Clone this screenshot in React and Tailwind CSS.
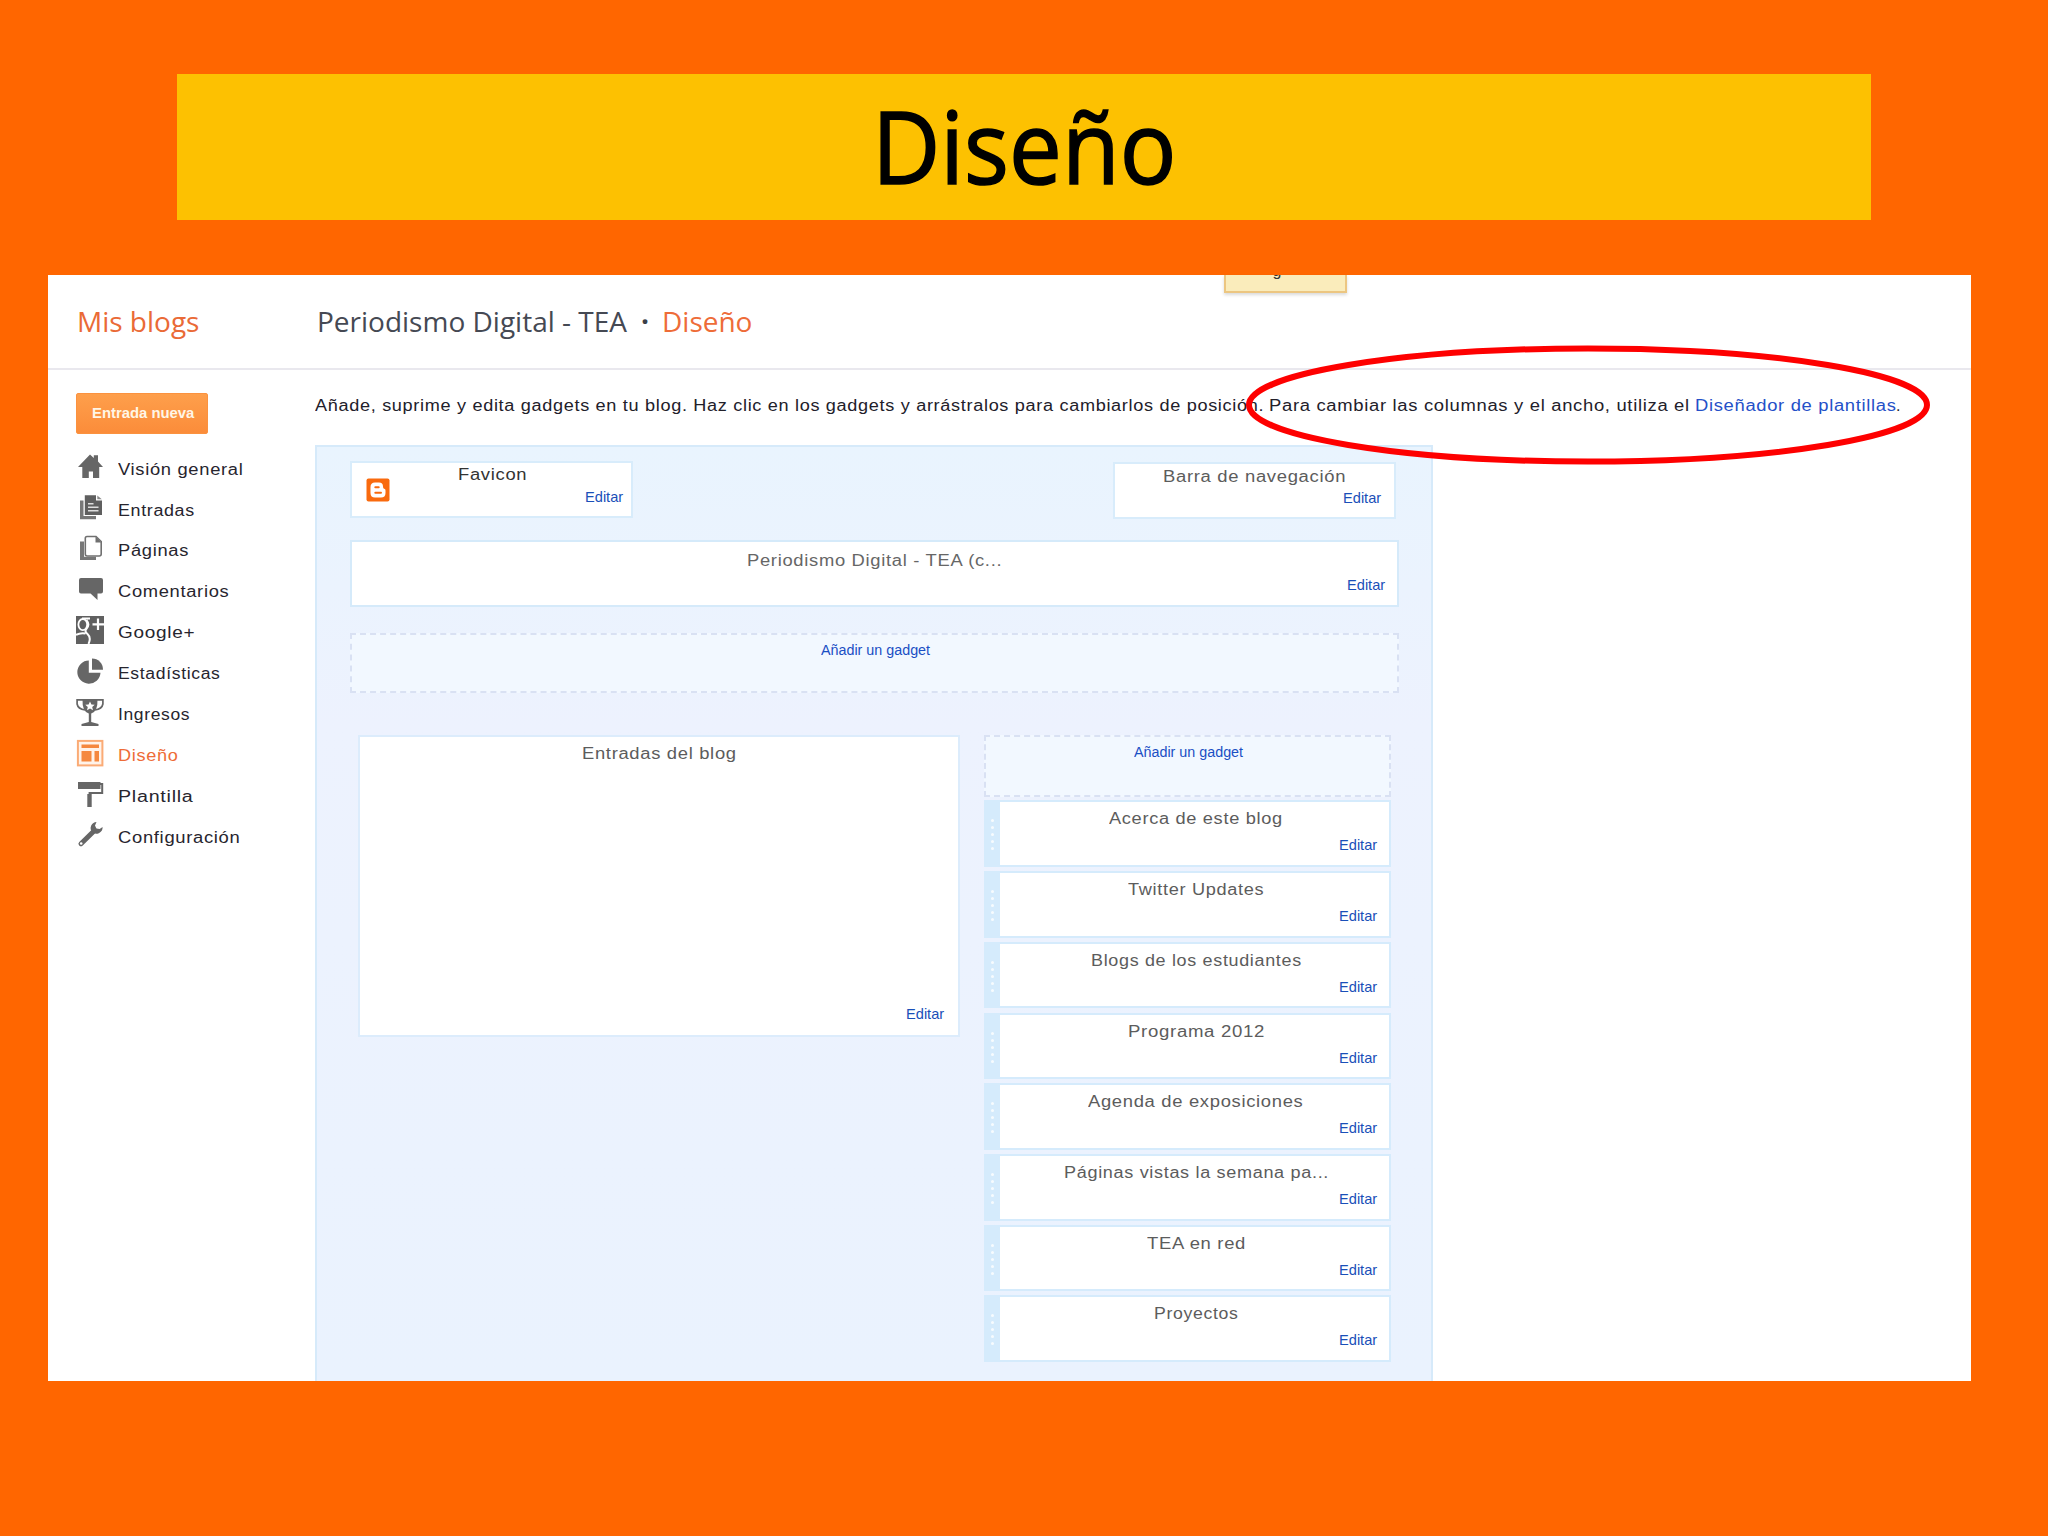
import React, { useLayoutEffect, useRef, useState } from "react";

/* Single-line text stretched horizontally to an exact width. */
function Fit({ w, className = "", children }) {
  const ref = useRef(null);
  const [scale, setScale] = useState(1);
  useLayoutEffect(() => {
    const natural = ref.current.offsetWidth;
    if (natural) setScale(w / natural);
  }, [w]);
  return (
    <span className={`block shrink-0 ${className}`} style={{ width: w }}>
      <span
        ref={ref}
        className="inline-block origin-left whitespace-nowrap align-top"
        style={{ transform: `scaleX(${scale})` }}
      >
        {children}
      </span>
    </span>
  );
}

const G = "#666666";

const icons = {
  home: (
    <g fill={G}>
      <path d="M14 2.5 L17.8 6 V3.2 H22 V9.6 L27 15 H23.2 V26 H17 V19.5 H12.8 V26 H6.3 V15 H2 Z" />
    </g>
  ),
  posts: (
    <g>
      <path d="M4 7.5 H7.5 V23 H20 V26.3 H4 Z" fill="#777" />
      <path d="M8.8 2.2 H20 V7.5 H26 V22 H8.8 Z" fill="#5f5f5f" />
      <path d="M21.3 2.4 L25.8 6.2 H21.3 Z" fill="#8a8a8a" />
      <path d="M12 10.7 H17.5 M12 14.2 H22.5 M12 17.7 H22.5" stroke="#ddd" strokeWidth="1.4" />
    </g>
  ),
  pages: (
    <g>
      <path d="M4 7.5 H8 V22.8 H20 V26 H4 Z" fill="#777" />
      <path d="M11 2.5 H20 L25.2 7.5 V20 Q25.2 22 23.2 22 H11.3 Q9.3 22 9.3 20 V4.2 Q9.3 2.5 11 2.5 Z" fill="#fff" stroke="#707070" strokeWidth="1.6" />
      <path d="M19.5 2.5 L25.5 8.5 H19.5 Z" fill="#707070" />
    </g>
  ),
  comments: (
    <path d="M5 3 H25 Q27 3 27 5 V16.5 Q27 18.5 25 18.5 H21.5 V25 L14.5 18.5 H5 Q3 18.5 3 16.5 V5 Q3 3 5 3 Z" fill={G} />
  ),
  gplus: (
    <g>
      <rect width="28" height="28" fill="#606060" />
      <ellipse cx="6.8" cy="8.6" rx="4.4" ry="5.6" fill="none" stroke="#fff" strokeWidth="1.8" />
      <path d="M6 2.4 H14 M10.5 4 Q14.5 9 10 13.5 Q8.5 15.5 11.5 18 Q15.5 21.5 12.5 28 M0 19 Q4 16.5 9.5 17.5" fill="none" stroke="#fff" strokeWidth="2" />
      <path d="M22 2.5 V14 M16.5 8.4 H28" stroke="#fff" strokeWidth="2.2" />
    </g>
  ),
  stats: (
    <g fill={G}>
      <path d="M12.8 3.5 V15.8 H24.5 A11.6 11.6 0 1 1 12.8 3.5 Z" />
      <path d="M16 1.5 A11 11 0 0 1 27 12.8 H16 Z" />
    </g>
  ),
  trophy: (
    <g>
      <path d="M6.5 1 H21.5 Q22 13.5 15.2 15.5 V24 L22.5 26 V28 H5.5 V26 L12.8 24 V15.5 Q6 13.5 6.5 1 Z" fill={G} />
      <path d="M7 1.8 H1.1 V6 Q2 11 9 12 M21 1.8 H26.9 V6 Q26 11 19 12" fill="none" stroke={G} strokeWidth="1.7" />
      <path d="M14 3.4 L15.4 6.5 L18.7 6.8 L16.2 9 L17 12.3 L14 10.6 L11 12.3 L11.8 9 L9.3 6.8 L12.6 6.5 Z" fill="#fff" />
    </g>
  ),
  layout: (
    <g>
      <rect x="1.9" y="1.9" width="24.5" height="24.5" fill="#fff3ea" stroke="#fbab75" strokeWidth="2" />
      <path d="M5.5 5.5 H23 V9 H5.5 Z M5.5 12 H15.5 V22.5 H5.5 Z M18.5 12 H23 V22.5 H18.5 Z" fill="#f5883f" />
    </g>
  ),
  template: (
    <g>
      <path d="M2 2 H24.5 V9 H2 Z" fill={G} />
      <path d="M24 4 H26.2 V13 H13.6 V18" fill="none" stroke={G} strokeWidth="2" />
      <path d="M11.3 14 H15.7 V27 H11.3 Z" fill={G} />
    </g>
  ),
  settings: (
    <g>
      <path d="M5 23.7 L18.5 10.5" stroke={G} strokeWidth="5" strokeLinecap="round" />
      <path d="M20.5 2 L19 5.4 L20.4 8.6 L23.6 9 L26.6 7 Q26.8 11.3 22.8 13.2 Q19 14.8 16.2 12 Q13.6 9.3 15.2 5.6 Q17 2 20.5 2 Z" fill={G} />
      <circle cx="5.2" cy="23.5" r="1.3" fill="#fff" />
    </g>
  ),
};

const menu = [
  ["home", "Visión general", 126],
  ["posts", "Entradas", 77],
  ["pages", "Páginas", 71],
  ["comments", "Comentarios", 111],
  ["gplus", "Google+", 77],
  ["stats", "Estadísticas", 102],
  ["trophy", "Ingresos", 72],
  ["layout", "Diseño", 60],
  ["template", "Plantilla", 75],
  ["settings", "Configuración", 123],
];

const gadgets = [
  ["Acerca de este blog", 174],
  ["Twitter Updates", 136],
  ["Blogs de los estudiantes", 211],
  ["Programa 2012", 137],
  ["Agenda de exposiciones", 216],
  ["Páginas vistas la semana pa...", 265],
  ["TEA en red", 99],
  ["Proyectos", 85],
];

function Edit({ className = "" }) {
  return (
    <Fit w={38} className={`self-end text-[15px] leading-5 text-[#1a4fb8] ${className}`}>
      Editar
    </Fit>
  );
}

function AddGadget({ className = "" }) {
  return (
    <div className={`flex justify-center border-2 border-dashed border-[#d9e1f3] bg-[#f2f8ff] pl-px ${className}`}>
      <Fit w={109} className="text-[15.5px] leading-5 text-[#1a4fc4]">
        Añadir un gadget
      </Fit>
    </div>
  );
}

function Gadget({ title, w }) {
  return (
    <div className="flex h-[66.6px] w-[407px] border-2 border-[#d5ebfc] bg-[#d5ebfc]">
      <div className="flex w-[14px] flex-col items-center gap-1 pt-[17px] pr-[2px]">
        {[0, 1, 2, 3, 4].map((d) => (
          <span key={d} className="size-[3px] rounded-full bg-white/80" />
        ))}
      </div>
      <div className="flex grow flex-col items-center bg-white pt-[7px] pr-[12px]">
        <Fit w={w} className="ml-[15px] text-base leading-5 tracking-[0.6px] text-[#5c5c5c]">
          {title}
        </Fit>
        <Edit className="mt-[6px]" />
      </div>
    </div>
  );
}

export default function App() {
  return (
    <div className="h-[1536px] w-[2048px] overflow-hidden bg-[#ff6600] pt-[74px] font-['Liberation_Sans',sans-serif]">
      <h1 className="ml-[177px] flex h-[146px] w-[1694px] justify-center bg-[#fdc101] font-['Open_Sans',sans-serif] text-[101px] leading-[143px] text-black [-webkit-text-stroke:1.6px_black]">
        <Fit w={304}>Diseño</Fit>
      </h1>

      <div className="relative mt-[55px] ml-[48px] h-[1106px] w-[1923px] bg-white">
        <header className="flex h-[95px] border-b-2 border-[#e9e8ee] pt-[26px] font-['Open_Sans',sans-serif] text-[28px] leading-[40px]">
          <Fit w={122} className="ml-[29px] text-[#ea6a36]">Mis blogs</Fit>
          <Fit w={310} className="ml-[118px] text-[#454953]">Periodismo Digital - TEA</Fit>
          <span className="ml-[14px] w-[8px] text-center font-bold text-[#3b3f49]">·</span>
          <Fit w={90} className="ml-[13px] text-[#ee6c38]">Diseño</Fit>
        </header>

        <div className="flex">
          <aside className="w-[266px] shrink-0 pt-[23px] pl-[28px]">
            <button className="flex h-[41px] w-[132px] items-center justify-center rounded-[2px] border border-[#fb923f] bg-linear-to-b from-[#fe9f4b] to-[#fb8c3a] text-[15px] font-bold text-[#fff6e6]">
              <Fit w={102} className="ml-px">Entrada nueva</Fit>
            </button>
            <nav className="mt-[12px]">
              {menu.map(([icon, label, w]) => (
                <div key={icon} className="flex h-[40.9px] items-center">
                  <svg width="28" height="28" viewBox="0 0 28 28" className="shrink-0">
                    {icons[icon]}
                  </svg>
                  <Fit
                    w={w}
                    className={`ml-[14px] pt-[6.4px] text-base leading-5 tracking-[0.6px] ${icon === "layout" ? "text-[#ee6c37]" : "text-[#27252e]"}`}
                  >
                    {label}
                  </Fit>
                </div>
              ))}
            </nav>
          </aside>

          <main className="pt-[26px]">
            <div className="flex text-base leading-5 tracking-[0.6px] text-[#22202a]">
              <Fit w={949} className="ml-px">
                Añade, suprime y edita gadgets en tu blog. Haz clic en los gadgets y arrástralos para cambiarlos de posición.
              </Fit>
              <Fit w={421} className="ml-[5px]">Para cambiar las columnas y el ancho, utiliza el</Fit>
              <Fit w={202} className="ml-[5px] text-[#2450c8]">Diseñador de plantillas</Fit>
              <span className="-ml-px">.</span>
            </div>

            <section className="ml-px mt-[29px] h-[936px] w-[1118px] border-2 border-b-0 border-[#d6eafa] bg-linear-to-b from-[#e9f4fe] via-[#edf2fe] via-30% to-[#eaf2fe] pt-[14px] pl-[33px]">
              <div className="flex">
                <div className="flex h-[57px] w-[283px] border-2 border-[#d8ecfb] bg-white">
                  <svg width="24" height="24" viewBox="0 0 24 24" className="ml-[14px] mt-[15px] shrink-0">
                    <rect x=".5" y=".5" width="23" height="23" rx="2" fill="#f96a0e" />
                    <path d="M9 4.5 H13 Q17 4.5 17 8.5 Q17 10.5 18 10.7 Q19.5 10.5 19.5 12.5 V15 Q19.5 19.5 15 19.5 H9 Q4.5 19.5 4.5 15 V9 Q4.5 4.5 9 4.5 Z" fill="#fff" />
                    <path d="M9.3 9.2 H12.7 M9.3 14.7 H15" stroke="#f96a0e" strokeWidth="2" strokeLinecap="round" />
                  </svg>
                  <div className="flex grow flex-col pt-[2px] pr-[8px]">
                    <Fit w={69} className="ml-[68px] text-base leading-5 tracking-[0.6px] text-[#333]">Favicon</Fit>
                    <Edit className="mt-[2px]" />
                  </div>
                </div>
                <div className="mt-px ml-[480px] flex h-[57px] w-[283px] flex-col items-center border-2 border-[#d8ecfb] bg-white pt-[3px] pr-[13px]">
                  <Fit w={183} className="ml-[13px] text-base leading-5 tracking-[0.6px] text-[#5c5c5c]">Barra de navegación</Fit>
                  <Edit className="mt-[0.5px]" />
                </div>
              </div>

              <div className="mt-[21px] flex h-[67px] w-[1049px] flex-col items-center border-2 border-[#d5eafa] bg-white pt-[9px] pr-[12px]">
                <Fit w={255} className="ml-[12px] text-base leading-5 tracking-[0.6px] text-[#666]">Periodismo Digital - TEA (c...</Fit>
                <Edit className="mt-[4px]" />
              </div>

              <AddGadget className="mt-[26px] h-[60px] w-[1049px] pt-[5px]" />

              <div className="mt-[42px] ml-[8px] flex">
                <div className="flex h-[302px] w-[602px] flex-col items-center border-2 border-[#dcecfc] bg-white pt-[7px] pr-[14px]">
                  <Fit w={155} className="ml-[14px] text-base leading-5 tracking-[0.6px] text-[#5c5c5c]">Entradas del blog</Fit>
                  <Edit className="mt-[240px]" />
                </div>
                <div className="ml-[24px] flex flex-col">
                  <AddGadget className="h-[62px] w-[407px] pt-[5px]" />
                  <div className="mt-[3.3px] flex flex-col gap-[4.15px]">
                    {gadgets.map(([title, w]) => (
                      <Gadget key={title} title={title} w={w} />
                    ))}
                  </div>
                </div>
              </div>
            </section>
          </main>
        </div>

        {/* Notification clipped by the top edge of the window */}
        <div className="absolute top-0 left-[1176px] flex h-[18px] w-[123px] items-end justify-center overflow-hidden border-2 border-t-0 border-[#ecc681] bg-[#faecbb] shadow-[0_2px_3px_rgba(0,0,0,0.15)]">
          <span className="mr-[17px] mb-[10px] text-base leading-5 text-[#333]">g</span>
        </div>

        {/* Highlight ring around the template designer link */}
        <svg className="absolute top-[66px] left-[1194px]" width="692" height="128" viewBox="0 0 692 128">
          <ellipse cx="346" cy="64" rx="339" ry="56.5" fill="none" stroke="#fe0000" strokeWidth="6" />
        </svg>
      </div>
    </div>
  );
}
